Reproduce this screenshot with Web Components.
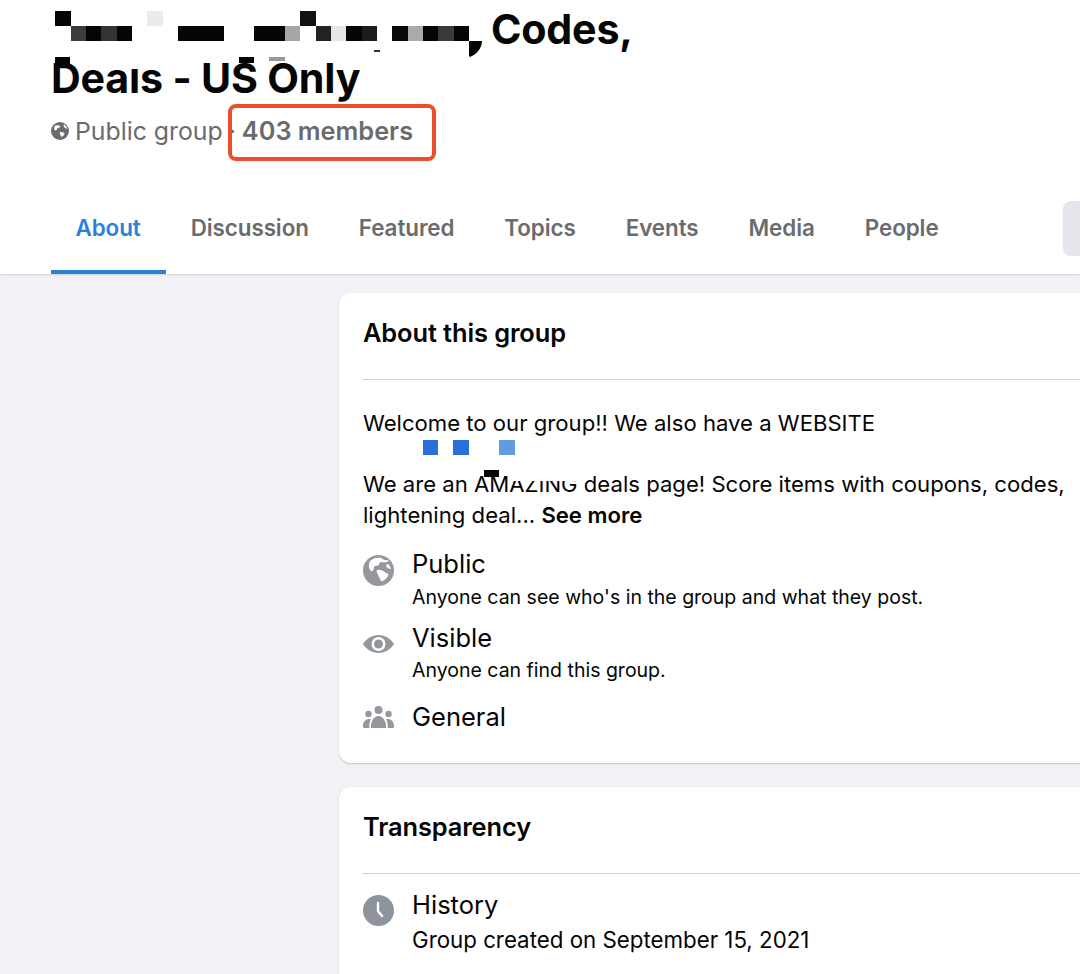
<!DOCTYPE html>
<html><head><meta charset="utf-8">
<style>
html,body{margin:0;padding:0;background:#f0f2f5}
body{width:1080px;height:974px;overflow:hidden;position:relative;font-family:Inter,"Liberation Sans",sans-serif;color:#050505}
</style></head><body>
<template id="t-header"><style>
:host{display:block;background:#fff;height:274px;box-shadow:0 1px 2px rgba(0,0,0,.14);position:relative}
h1{margin:0;padding:5px 0 0 51px;font-size:41.200px;line-height:49px;font-weight:700;letter-spacing:-.2px}
.first{display:block;padding-left:440px}
.sub{display:flex;align-items:center;height:56px;padding-left:51px;color:#6a6b6d;font-size:24.800px;line-height:54px}
.sub svg{width:18px;height:18px;margin-right:6px;flex:none}
.dot{margin:0 6px 0 6px}
.mem{position:relative;font-weight:600;font-size:25.300px}
.mem::after{content:"";position:absolute;left:-14px;right:-23px;top:0;height:57px;box-sizing:border-box;border:4px solid #ec4f2c;border-radius:8px}
.tabs{display:flex;align-items:center;height:92px;margin-top:23px;padding-left:51px}
.btn{flex:none;width:17px;height:55px;border-radius:8px 0 0 8px;background:#e4e6eb;margin-left:auto}
</style>
<h1><span class="first">Codes,</span>Deals - US Only</h1>
<div class="sub">
<svg viewBox="0 0 24 24"><circle cx="12" cy="12" r="12" fill="#6a6b6d"/><path fill="#fff" d="M5 5c2-1 5-1 7 0 1 2-1 3-3 3-1 2-2 4-4 3-1-1-1-4 0-6zM12 13c2 0 5 1 6 2 0 2-2 4-4 5-1-2-3-5-2-7zM17 3c2 1 4 3 5 6-2 0-4-1-5-3z"/></svg>
<span>Public group</span><span class="dot">·</span><span class="mem">403 members</span></div>
<div class="tabs"><slot></slot><div class="btn"></div></div>
</template>

<template id="t-tab"><style>
:host{display:flex;flex:none;align-items:center;box-sizing:border-box;height:92px;padding:2px 25px 0;font-size:22.400px;font-weight:600;color:#6a6b6d;letter-spacing:-.07px;border-bottom:4px solid transparent}
:host([active]){color:#2d7fdc;border-bottom-color:#2d7fdc;padding-left:24.500px}
</style><slot></slot></template>

<template id="t-card"><style>
:host{display:block;flex:none;width:760px;box-sizing:border-box;background:#fff;border-radius:12px;box-shadow:0 1px 2px rgba(0,0,0,.2);padding-left:24px;padding-bottom:var(--pb,30px)}
h2{margin:0;font-size:25.400px;font-weight:600;line-height:80px;height:86px;border-bottom:1px solid #ced0d4;letter-spacing:-.1px}
</style><h2></h2><slot></slot></template>

<template id="t-row"><style>
:host{display:grid;grid-template-columns:49px 1fr;margin-top:var(--mt,10px)}
.i{display:flex;align-items:flex-start;padding-top:var(--it,7px);height:33px;box-sizing:border-box}
.t{font-size:25.500px;line-height:33px}
.d{font-size:var(--ds,19.500px);line-height:var(--dl,31px);grid-column:2}
::slotted(svg){width:31px;height:31px;display:block}
</style><div class="i"><slot name="icon"></slot></div><div class="t"><slot name="title"></slot></div><div class="d"><slot></slot></div></template>

<template id="t-mask"><style>
:host{display:block;position:absolute;left:0;top:0;width:1080px;height:974px;pointer-events:none}
svg{display:block}
</style>
<svg width="1080" height="974" viewBox="0 0 1080 974" shape-rendering="crispEdges">
<rect x="55" y="11" width="16" height="15" fill="#050505"/>
<rect x="71" y="26" width="15" height="15" fill="#3d3d3d"/>
<rect x="86" y="26" width="15" height="15" fill="#050505"/>
<rect x="101" y="26" width="16" height="15" fill="#333"/>
<rect x="117" y="26" width="15" height="15" fill="#050505"/>
<rect x="147" y="11" width="16" height="15" fill="#ebebeb"/>
<rect x="178" y="26" width="46" height="15" fill="#050505"/>
<rect x="254" y="26" width="31" height="15" fill="#050505"/>
<rect x="285" y="26" width="15" height="15" fill="#a6a6a6"/>
<rect x="300" y="11" width="16" height="15" fill="#111"/>
<rect x="316" y="26" width="15" height="15" fill="#222"/>
<rect x="331" y="26" width="15" height="15" fill="#e6e6e6"/>
<rect x="346" y="26" width="16" height="15" fill="#050505"/>
<rect x="362" y="26" width="15" height="15" fill="#1c1c1c"/>
<rect x="374" y="50" width="6" height="2" fill="#333"/>
<rect x="392" y="26" width="16" height="15" fill="#0a0a0a"/>
<rect x="408" y="26" width="15" height="15" fill="#aaa"/>
<rect x="423" y="26" width="15" height="15" fill="#050505"/>
<rect x="438" y="26" width="16" height="15" fill="#3a3a3a"/>
<rect x="454" y="26" width="15" height="15" fill="#050505"/>
<path shape-rendering="auto" d="M469 41h13c0 7-5 13-12 16l-1-1z" fill="#050505"/>
<rect x="131" y="56" width="11" height="13" fill="#fff"/>
<rect x="55" y="57" width="15" height="9" fill="#050505"/>
<rect x="239" y="57" width="15" height="6" fill="#050505"/>
<rect x="269" y="57" width="16" height="4" fill="#999"/>
<rect x="423" y="440" width="15" height="15" fill="#2a6fd6"/>
<rect x="453" y="440" width="16" height="15" fill="#2a6fd6"/>
<rect x="499" y="440" width="16" height="15" fill="#639ae2"/>
<rect x="510" y="472" width="70" height="9" fill="#fff"/>
<rect x="484" y="470" width="15" height="7" fill="#050505"/>
</svg></template>

<script>
function def(name,tid,extra){customElements.define(name,class extends HTMLElement{constructor(){super();this.attachShadow({mode:'open'}).appendChild(document.getElementById(tid).content.cloneNode(true));}connectedCallback(){if(extra)extra(this)}})}
def('group-header','t-header');
def('group-tab','t-tab');
def('info-card','t-card',el=>{el.shadowRoot.querySelector('h2').textContent=el.getAttribute('heading')});
def('info-row','t-row');
def('pixel-mask','t-mask');
customElements.define('page-main',class extends HTMLElement{constructor(){super();this.attachShadow({mode:'open'}).innerHTML='<style>:host{display:flex;flex-direction:column;gap:24px;padding:19px 0 0 339px}</style><slot></slot>'}});
customElements.define('card-text',class extends HTMLElement{constructor(){super();this.attachShadow({mode:'open'}).innerHTML='<style>:host{display:block;font-size:22.130px;line-height:31px;padding-top:28px;margin-bottom:16px;white-space:nowrap}</style><slot></slot>'}});
</script>

<group-header>
<group-tab active>About</group-tab><group-tab>Discussion</group-tab><group-tab>Featured</group-tab><group-tab>Topics</group-tab><group-tab>Events</group-tab><group-tab>Media</group-tab><group-tab>People</group-tab>
</group-header>
<page-main>
<info-card heading="About this group">
<card-text>Welcome to our group!! We also have a WEBSITE<div style="height:30px"></div>We are an AMAZING deals page! Score items with coupons, codes,<br>lightening deal... <b style="font-weight:600">See more</b></card-text>
<info-row style="--mt:0px;--dl:34px;--it:8px">
<svg slot="icon" viewBox="0 0 31 31"><circle cx="15.500" cy="15.500" r="15.500" fill="#94979b"/><path fill="#fff" d="M7 6c3-3 8-4 11-3 2 1 4 3 6 2l2 1-2 1c-2 0-3 1-5 0-2 0-3 1-3 3-1 1-4 0-5 2 0 2-1 5-3 4-2-2-3-6-1-10zM14 15c3-1 7 1 9 3 2 0 3 1 2 3-2 3-5 6-7 5-1-2-2-4-3-6-1-2-2-4-1-5zM24 9c2 0 3 2 4 5-2 0-4-1-5-3z"/></svg>
<span slot="title">Public</span>Anyone can see who's in the group and what they post.</info-row>
<info-row style="--mt:7px;--dl:33px;--it:14px">
<svg slot="icon" viewBox="0 0 31 18" style="height:18px"><path fill="#94979b" d="M15.500 0C9 0 3.500 3.500 0 9c3.500 5.500 9 9 15.500 9S27.500 14.500 31 9C27.500 3.500 22 0 15.500 0z"/><circle cx="15.500" cy="9" r="7" fill="#fff"/><circle cx="15.500" cy="9" r="4.500" fill="#94979b"/></svg>
<span slot="title">Visible</span>Anyone can find this group.</info-row>
<info-row style="--mt:13px;--it:6px;--dl:0">
<svg slot="icon" viewBox="0 0 31 22" style="height:22px"><g fill="#94979b"><circle cx="15.500" cy="4" r="4"/><circle cx="5.500" cy="8" r="3.200"/><circle cx="25.500" cy="8" r="3.200"/><path d="M8 22c-.5-5 2-12 7.500-12S23.500 17 23 22z"/><path d="M6.500 22H1c-1.200 0-1-1-1-2 0-4 2.500-7 6-7h2c-1.500 2.500-2 6-1.500 9zM24.500 22H30c1.200 0 1-1 1-2 0-4-2.500-7-6-7h-2c1.500 2.500 2 6 1.500 9z"/></g></svg>
<span slot="title">General</span></info-row>
</info-card>
<info-card heading="Transparency" style="--pb:60px">
<info-row style="--mt:14px;--ds:22.300px;--dl:38px">
<svg slot="icon" viewBox="0 0 31 31"><circle cx="15.500" cy="15.500" r="15.500" fill="#8d949e"/><path d="M15 8v8l4 5" fill="none" stroke="#fff" stroke-width="2.400" stroke-linecap="round" stroke-linejoin="round"/></svg>
<span slot="title">History</span>Group created on September 15, 2021</info-row>
</info-card>
</page-main>
<pixel-mask></pixel-mask>
</body></html>
